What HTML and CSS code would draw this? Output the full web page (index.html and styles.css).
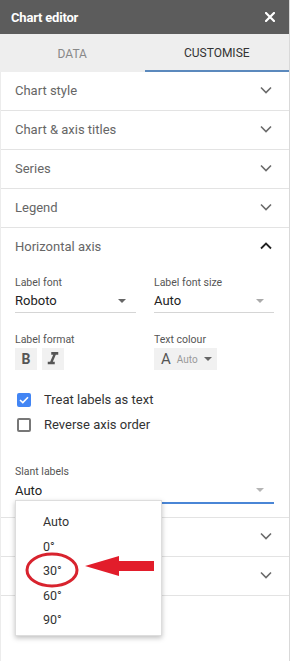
FILE: index.html
```html
<!DOCTYPE html>
<html lang="en">
<head>
  <meta charset="UTF-8">
  <meta name="viewport" content="width=device-width, initial-scale=1.0">
  <title>Chart editor</title>
  <link rel="stylesheet" href="styles.css">
</head>
<body>
  <div class="editor">
    <header class="editor-header">
      <span class="editor-title">Chart editor</span>
      <svg class="close" width="10" height="10" viewBox="0 0 10 10">
        <path d="M1 1L9 9M9 1L1 9" stroke="#fff" stroke-width="2.2" stroke-linecap="square"/>
      </svg>
    </header>

    <nav class="tabs">
      <div class="tab">DATA</div>
      <div class="tab active">CUSTOMISE</div>
    </nav>

    <div class="section-head">
      <span>Chart style</span>
      <svg class="chevron" width="12" height="8" viewBox="0 0 12 8"><path d="M1 1.5L6 6.5L11 1.5" fill="none" stroke="#6b6b6b" stroke-width="1.6"/></svg>
    </div>
    <div class="section-head">
      <span>Chart &amp; axis titles</span>
      <svg class="chevron" width="12" height="8" viewBox="0 0 12 8"><path d="M1 1.5L6 6.5L11 1.5" fill="none" stroke="#6b6b6b" stroke-width="1.6"/></svg>
    </div>
    <div class="section-head">
      <span>Series</span>
      <svg class="chevron" width="12" height="8" viewBox="0 0 12 8"><path d="M1 1.5L6 6.5L11 1.5" fill="none" stroke="#6b6b6b" stroke-width="1.6"/></svg>
    </div>
    <div class="section-head">
      <span>Legend</span>
      <svg class="chevron" width="12" height="8" viewBox="0 0 12 8"><path d="M1 1.5L6 6.5L11 1.5" fill="none" stroke="#6b6b6b" stroke-width="1.6"/></svg>
    </div>

    <div class="section-open">
      <div class="section-head open">
        <span>Horizontal axis</span>
        <svg class="chevron" width="12" height="8" viewBox="0 0 12 8"><path d="M1 6.5L6 1.5L11 6.5" fill="none" stroke="#222" stroke-width="1.8"/></svg>
      </div>

      <div class="axis-body">
        <div class="field-row">
          <div class="field">
            <div class="field-label">Label font</div>
            <div class="select">
              <span>Roboto</span>
              <span class="caret dark"></span>
            </div>
          </div>
          <div class="field">
            <div class="field-label">Label font size</div>
            <div class="select">
              <span>Auto</span>
              <span class="caret"></span>
            </div>
          </div>
        </div>

        <div class="field-row format-row">
          <div class="field">
            <div class="field-label">Label format</div>
            <div class="format-buttons">
              <div class="fmt-btn bold">B</div>
              <div class="fmt-btn">
                <svg width="14" height="14" viewBox="4 4 16 16"><path d="M10 4v3h2.21l-3.42 8H6v3h8v-3h-2.21l3.42-8H18V4z" fill="#555"/></svg>
              </div>
            </div>
          </div>
          <div class="field">
            <div class="field-label">Text colour</div>
            <div class="colour-btn">
              <span class="colour-a">A</span>
              <span class="colour-auto">Auto</span>
              <span class="caret dark"></span>
            </div>
          </div>
        </div>

        <div class="checks">
          <label class="check-row">
            <span class="box checked">
              <svg width="10" height="8" viewBox="0 0 10 8"><path d="M1 4L3.8 6.6L9 1.2" fill="none" stroke="#fff" stroke-width="1.6"/></svg>
            </span>
            Treat labels as text
          </label>
          <label class="check-row">
            <span class="box"></span>
            Reverse axis order
          </label>
        </div>

        <div class="slant">
          <div class="field-label">Slant labels</div>
          <div class="select focused">
            <span>Auto</span>
            <span class="caret light"></span>
          </div>
        </div>

        <ul class="menu">
          <li>Auto</li>
          <li>0°</li>
          <li>30°</li>
          <li>60°</li>
          <li>90°</li>
        </ul>

        <svg class="annotation" width="140" height="48" viewBox="0 0 140 48">
          <ellipse cx="31" cy="23" rx="25" ry="16" fill="none" stroke="#d8232e" stroke-width="3"/>
          <path d="M64 19L98 9L98 14L133 14L133 24L98 24L98 29Z" fill="#e21d2b"/>
        </svg>
      </div>
    </div>

    <!-- these two rows sit under the open menu, only their chevrons show -->
    <div class="section-head">
      <span></span>
      <svg class="chevron" width="12" height="8" viewBox="0 0 12 8"><path d="M1 1.5L6 6.5L11 1.5" fill="none" stroke="#6b6b6b" stroke-width="1.6"/></svg>
    </div>
    <div class="section-head">
      <span></span>
      <svg class="chevron" width="12" height="8" viewBox="0 0 12 8"><path d="M1 1.5L6 6.5L11 1.5" fill="none" stroke="#6b6b6b" stroke-width="1.6"/></svg>
    </div>
    <div class="filler"></div>
  </div>
</body>
</html>
```

FILE: styles.css
```css
:root {
  --header: #5c5c5c;
  --tabs-bg: #eeeeee;
  --line: #e3e3e3;
  --text: #333333;
  --muted: #666666;
  --blue: #4a86d6;
  --tab-line: #5b89bd;
}

* {
  box-sizing: border-box;
  margin: 0;
  padding: 0;
}

body {
  font-family: Roboto, "Noto Sans", sans-serif;
  background: #fff;
  color: var(--text);
  width: 294px;
}

.editor {
  width: 290px;
  border-right: 1px solid #d9d9d9;
  border-left: 1px solid #ececec;
  min-height: 661px;
}

.editor-header {
  height: 34px;
  background: var(--header);
  display: flex;
  align-items: center;
  justify-content: space-between;
  padding: 0 12px 0 11px;
  margin-left: -1px;
}

.editor-title {
  color: #fff;
  font-weight: 700;
  font-size: 13px;
  letter-spacing: -0.2px;
}

.close {
  margin-right: 2px;
}

.tabs {
  display: flex;
  height: 38px;
  background: var(--tabs-bg);
  margin-left: -1px;
}

.tab {
  flex: 1;
  display: flex;
  align-items: center;
  justify-content: center;
  font-size: 12px;
  color: #888;
  padding-top: 2px;
}

.tab.active {
  color: #333;
  border-bottom: 2px solid var(--tab-line);
}

.section-head {
  height: 39px;
  padding: 0 17px 2px 14px;
  display: flex;
  align-items: center;
  justify-content: space-between;
  border-bottom: 1px solid var(--line);
  font-size: 13px;
  color: var(--muted);
}

.section-head.open {
  border-bottom: none;
  height: 38px;
}

.section-open {
  border-bottom: 1px solid var(--line);
}

.axis-body {
  position: relative;
  padding: 10px 15px 13px 14px;
}

.field-row {
  display: grid;
  grid-template-columns: 121px 120px;
  column-gap: 18px;
}

.field-label {
  font-size: 10.5px;
  color: #555;
  line-height: 14px;
}

.select {
  display: flex;
  align-items: center;
  justify-content: space-between;
  height: 23px;
  padding: 1px 10px 2px 0;
  border-bottom: 1px solid #d5d5d5;
  font-size: 13px;
  color: #222;
}

.caret {
  width: 0;
  height: 0;
  border-left: 4px solid transparent;
  border-right: 4px solid transparent;
  border-top: 4px solid #aaa;
}

.caret.dark {
  border-top-color: #666;
}

.caret.light {
  border-top-color: #b5b5b5;
}

.format-row {
  margin-top: 20px;
}

.format-buttons {
  display: flex;
  gap: 5px;
  margin-top: 1px;
}

.fmt-btn {
  width: 22px;
  height: 22px;
  background: #f1f1f1;
  display: flex;
  align-items: center;
  justify-content: center;
  font-size: 14px;
  color: #555;
}

.fmt-btn.bold {
  font-weight: 700;
}

.colour-btn {
  width: 63px;
  height: 22px;
  margin-top: 1px;
  background: #f1f1f1;
  display: flex;
  align-items: center;
  padding: 0 8px 0 7px;
  gap: 6px;
}

.colour-a {
  font-size: 15px;
  color: #555;
}

.colour-auto {
  font-size: 10px;
  color: #999;
  flex: 1;
}

.checks {
  margin-top: 23px;
  display: flex;
  flex-direction: column;
  gap: 11px;
}

.check-row {
  display: flex;
  align-items: center;
  gap: 13px;
  font-size: 13px;
  color: #333;
  padding-left: 2px;
  line-height: 14px;
}

.box {
  width: 14px;
  height: 14px;
  border: 2px solid #777;
  border-radius: 2px;
  display: flex;
  align-items: center;
  justify-content: center;
}

.box.checked {
  background: #4285f4;
  border-color: #4285f4;
}

.slant {
  margin-top: 33px;
}

.slant .select {
  border-bottom: 2px solid var(--blue);
  height: 25px;
  padding-right: 10px;
}

.menu {
  position: absolute;
  left: 14px;
  top: 234px;
  width: 147px;
  height: 136px;
  list-style: none;
  background: #fff;
  border: 1px solid #ddd;
  box-shadow: 0 2px 5px rgba(0, 0, 0, 0.25);
  padding: 9px 0 0 27px;
  z-index: 2;
}

.menu li {
  font-size: 12.5px;
  color: #333;
  line-height: 24.5px;
}

.annotation {
  position: absolute;
  left: 20px;
  top: 281px;
  z-index: 3;
}

.filler {
  height: 67px;
}
```
